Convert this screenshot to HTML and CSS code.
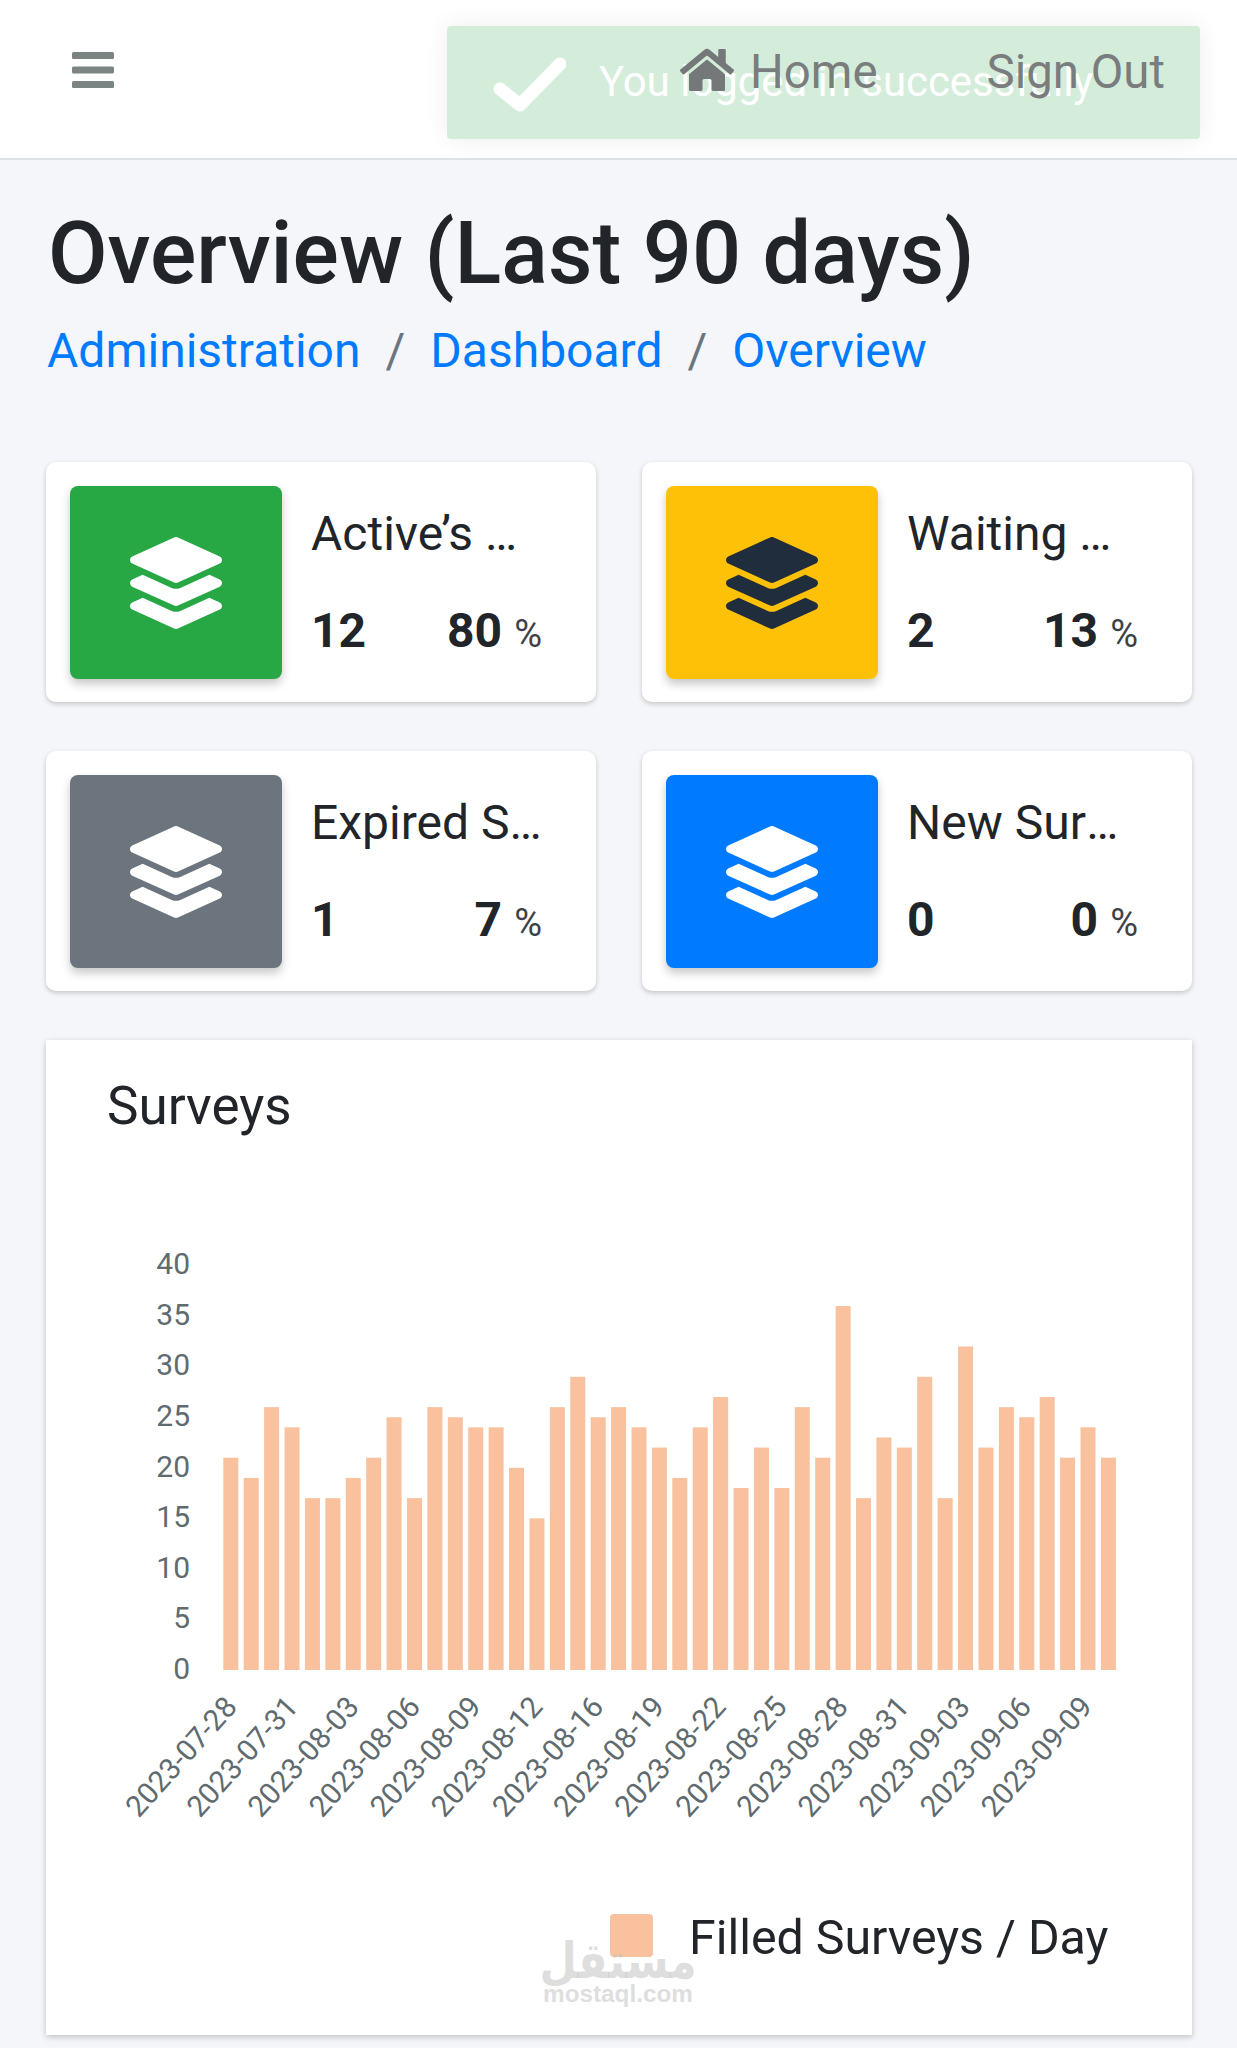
FILE: index.html
```html
<!DOCTYPE html>
<html lang="en">
<head>
<meta charset="utf-8">
<title>Overview</title>
<link rel="stylesheet" href="styles.css">
</head>
<body>
<header class="topbar">
  <svg class="burger" viewBox="0 0 42 36" aria-hidden="true"><rect y="0" width="42" height="7" rx="1.5"/><rect y="14.5" width="42" height="7" rx="1.5"/><rect y="29" width="42" height="7" rx="1.5"/></svg>
  <nav class="topnav">
    <a class="navlink homelink"><svg class="homeicon" viewBox="0 0 576 512" aria-hidden="true"><path d="M280.37 148.26L96 300.11V464a16 16 0 0 0 16 16l112.06-.29a16 16 0 0 0 15.92-16V368a16 16 0 0 1 16-16h64a16 16 0 0 1 16 16v95.64a16 16 0 0 0 16 16.05L464 480a16 16 0 0 0 16-16V300L295.67 148.26a12.19 12.19 0 0 0-15.3 0zM571.6 251.47L488 182.56V44.05a12 12 0 0 0-12-12h-56a12 12 0 0 0-12 12v72.61L318.47 43a48 48 0 0 0-61 0L4.34 251.47a12 12 0 0 0-1.6 16.9l25.5 31A12 12 0 0 0 45.15 301l235.22-193.74a12.19 12.19 0 0 1 15.3 0L530.9 301a12 12 0 0 0 16.9-1.6l25.5-31a12 12 0 0 0-1.7-16.93z"/></svg>Home</a>
    <a class="navlink">Sign Out</a>
  </nav>
  <div class="toast">
    <svg class="toastcheck" viewBox="0 0 73 55" aria-hidden="true"><polyline points="7,32 27,48 67,7"/></svg>
    <span>You logged in successfully</span>
  </div>
</header>

<main class="content">
  <h1 class="title">Overview (Last 90 days)</h1>
  <ol class="crumbs">
    <li><a>Administration</a></li>
    <li class="sep">/</li>
    <li><a>Dashboard</a></li>
    <li class="sep">/</li>
    <li><a>Overview</a></li>
  </ol>

  <section class="stats">
    <article class="stat">
      <div class="tile green"><svg class="layers" viewBox="0 0 512 512" aria-hidden="true"><use href="#layer"/></svg></div>
      <div class="statbody"><div class="statname">Active’s Surveys</div><div class="statnums"><b>12</b><span><b>80</b><small>%</small></span></div></div>
    </article>
    <article class="stat">
      <div class="tile yellow"><svg class="layers" viewBox="0 0 512 512" aria-hidden="true"><use href="#layer"/></svg></div>
      <div class="statbody"><div class="statname">Waiting Surveys</div><div class="statnums"><b>2</b><span><b>13</b><small>%</small></span></div></div>
    </article>
    <article class="stat">
      <div class="tile gray"><svg class="layers" viewBox="0 0 512 512" aria-hidden="true"><use href="#layer"/></svg></div>
      <div class="statbody"><div class="statname">Expired Surveys</div><div class="statnums"><b>1</b><span><b>7</b><small>%</small></span></div></div>
    </article>
    <article class="stat">
      <div class="tile blue"><svg class="layers" viewBox="0 0 512 512" aria-hidden="true"><use href="#layer"/></svg></div>
      <div class="statbody"><div class="statname">New Surveys</div><div class="statnums"><b>0</b><span><b>0</b><small>%</small></span></div></div>
    </article>
  </section>

  <section class="chartcard">
    <h2 class="charttitle">Surveys</h2>
    <svg class="chart" id="chart" viewBox="46 1180 1146 690" aria-label="Bar chart of filled surveys per day"></svg>
    <div class="legend"><i class="swatch"></i><span>Filled Surveys / Day</span></div>
    <div class="watermark"><span class="wm-ar" lang="ar" dir="rtl">مستقل</span><span class="wm-en">mostaql.com</span></div>
  </section>
</main>

<svg class="defs" aria-hidden="true"><defs><path id="layer" d="M12.41 148.02l232.94 105.67c6.8 3.09 14.49 3.09 21.29 0l232.94-105.67c16.55-7.51 16.55-32.52 0-40.03L266.65 2.31a25.607 25.607 0 0 0-21.29 0L12.41 107.98c-16.55 7.51-16.55 32.53 0 40.04zm487.18 88.28l-58.09-26.33-161.64 73.27c-7.56 3.43-15.59 5.17-23.86 5.17s-16.29-1.74-23.86-5.17L70.51 209.97l-58.1 26.33c-16.55 7.5-16.55 32.5 0 40l232.94 105.59c6.8 3.08 14.49 3.08 21.29 0L499.59 276.3c16.55-7.5 16.55-32.5 0-40zm0 127.8l-57.87-26.23-161.86 73.37c-7.56 3.43-15.59 5.17-23.86 5.17s-16.29-1.74-23.86-5.17L70.29 337.87 12.41 364.1c-16.55 7.5-16.55 32.5 0 40l232.94 105.59c6.8 3.08 14.49 3.08 21.29 0L499.59 404.1c16.55-7.5 16.55-32.5 0-40z"/></defs></svg>
<script src="chart.js"></script>
</body>
</html>
```
FILE: styles.css
```css
* { box-sizing: border-box; }
html, body { margin: 0; padding: 0; }
body { background: #f4f6f9; color: #212529; font-family: Roboto, "Liberation Sans", sans-serif; width: 1237px; height: 2048px; overflow: hidden; }
a { color: inherit; text-decoration: none; }

.topbar { position: relative; height: 160px; background: #fff; border-bottom: 2px solid #dee2e6; display: flex; align-items: flex-start; justify-content: space-between; padding: 52px 72px 0 72px; }
.burger { width: 42px; height: 36px; fill: #7b8383; display: block; }
.topnav { position: relative; z-index: 1; display: flex; align-items: center; gap: 109px; margin-top: -8px; }
.navlink { display: flex; align-items: center; color: #7a7d7d; font-size: 47.4px; line-height: 56px; white-space: nowrap; }
.homeicon { width: 54px; height: 48px; fill: #747878; margin-right: 16px; margin-top: -4px; }

.toast { position: absolute; left: 447px; top: 26px; width: 753px; height: 113px; border-radius: 4px; background: rgba(40, 167, 69, .2); box-shadow: 0 0 26px rgba(0, 0, 0, .07); color: #fff; display: flex; align-items: flex-start; padding: 31px 0 0 46px; font-size: 41.9px; line-height: 50px; }
.toastcheck { width: 73px; height: 55px; margin-right: 33px; flex: none; fill: none; stroke: #fff; stroke-width: 13; stroke-linecap: round; stroke-linejoin: round; }

.content { padding: 0 45px 0 46px; }
.title { margin: 42px 0 0 2px; font-size: 86.5px; line-height: 104px; font-weight: 500; color: #212529; white-space: nowrap; }
.crumbs { list-style: none; margin: 14px 0 0 1px; padding: 0; display: flex; font-size: 48px; line-height: 62px; color: #007bff; }
.sep { color: #6c757d; margin: 0 25px; }

.stats { display: grid; grid-template-columns: 550px 550px; column-gap: 46px; row-gap: 49px; margin-top: 80px; }
.stat { height: 240px; background: #fff; border-radius: 10px; box-shadow: 0 2px 5px rgba(0, 0, 0, .2); padding: 24px; display: flex; min-width: 0; }
.tile { flex: none; width: 212px; height: 193px; border-radius: 8px; box-shadow: 0 5px 10px rgba(0, 0, 0, .22); display: flex; align-items: center; justify-content: center; }
.green { background: #28a745; color: #fff; }
.yellow { background: #ffc107; color: #1f2d3d; }
.gray { background: #6c757d; color: #fff; }
.blue { background: #007bff; color: #fff; }
.layers { width: 92px; height: 92px; fill: currentColor; }
.statbody { flex: 1; min-width: 0; padding: 18px 30px 0 29px; }
.statname { font-size: 48px; line-height: 60px; white-space: nowrap; overflow: hidden; text-overflow: ellipsis; }
.statnums { margin-top: 37px; display: flex; justify-content: space-between; font-size: 48px; line-height: 60px; }
.statnums b { font-weight: 700; }
.statnums small { font-size: 38px; font-weight: 400; margin-left: 12px; color: #3c4247; }

.chartcard { position: relative; height: 995px; margin-top: 49px; background: #fff; box-shadow: 0 2px 6px rgba(0, 0, 0, .22); }
.charttitle { margin: 0; padding: 36px 0 0 61px; font-size: 53px; line-height: 60px; font-weight: 400; }
.chart { display: block; width: 1146px; height: 690px; margin-top: 44px; }
.tick { font-family: Roboto, sans-serif; fill: #5f6b6f; }
.ytick { font-size: 30px; }
.xtick { font-size: 29.5px; }
.bar { fill: #f9c19d; }
.legend { position: absolute; left: 564px; top: 870px; display: flex; align-items: center; font-size: 48.3px; line-height: 56px; white-space: nowrap; }
.swatch { width: 43px; height: 43px; border-radius: 4px; background: #f9c19d; margin-right: 36px; margin-top: -6px; }
.watermark { position: absolute; left: 498px; top: 896px; width: 148px; display: flex; flex-direction: column; align-items: center; color: rgba(190, 190, 190, .5); pointer-events: none; }
.wm-ar { font-family: "DejaVu Sans", sans-serif; font-weight: 700; font-size: 43px; line-height: 50px; transform: scaleY(1.15); }
.wm-en { font-family: "Liberation Sans", sans-serif; font-weight: 700; font-size: 24.3px; line-height: 20px; margin-top: -2px; }
.defs { position: absolute; width: 0; height: 0; }
```
FILE: chart.js
```js
var values = [21,19,26,24,17,17,19,21,25,17,26,25,24,24,20,15,26,29,25,26,24,22,19,24,27,18,22,18,26,21,36,17,23,22,29,17,32,22,26,25,27,21,24,21];
var dates = ['07-28','07-31','08-03','08-06','08-09','08-12','08-16','08-19','08-22','08-25','08-28','08-31','09-03','09-06','09-09'];
var svg = document.getElementById('chart');
var NS = 'http://www.w3.org/2000/svg';
var base = 1670, unit = 10.11, x0 = 223.3, pitch = 20.41, bw = 15;
function add(tag, attrs, text) {
  var el = document.createElementNS(NS, tag);
  for (var k in attrs) el.setAttribute(k, attrs[k]);
  if (text) el.textContent = text;
  svg.appendChild(el);
}
for (var t = 0; t <= 40; t += 5) {
  add('text', { x: 190, y: 1679 - t * 10.125, 'text-anchor': 'end', 'class': 'tick ytick' }, String(t));
}
values.forEach(function (v, i) {
  add('rect', { x: x0 + i * pitch, y: base - v * unit, width: bw, height: v * unit, 'class': 'bar' });
});
dates.forEach(function (d, i) {
  var x = 238.5 + i * 61.1, y = 1708;
  add('text', { x: x, y: y, 'text-anchor': 'end', transform: 'rotate(-48 ' + x + ' ' + y + ')', 'class': 'tick xtick' }, '2023-' + d);
});
```
